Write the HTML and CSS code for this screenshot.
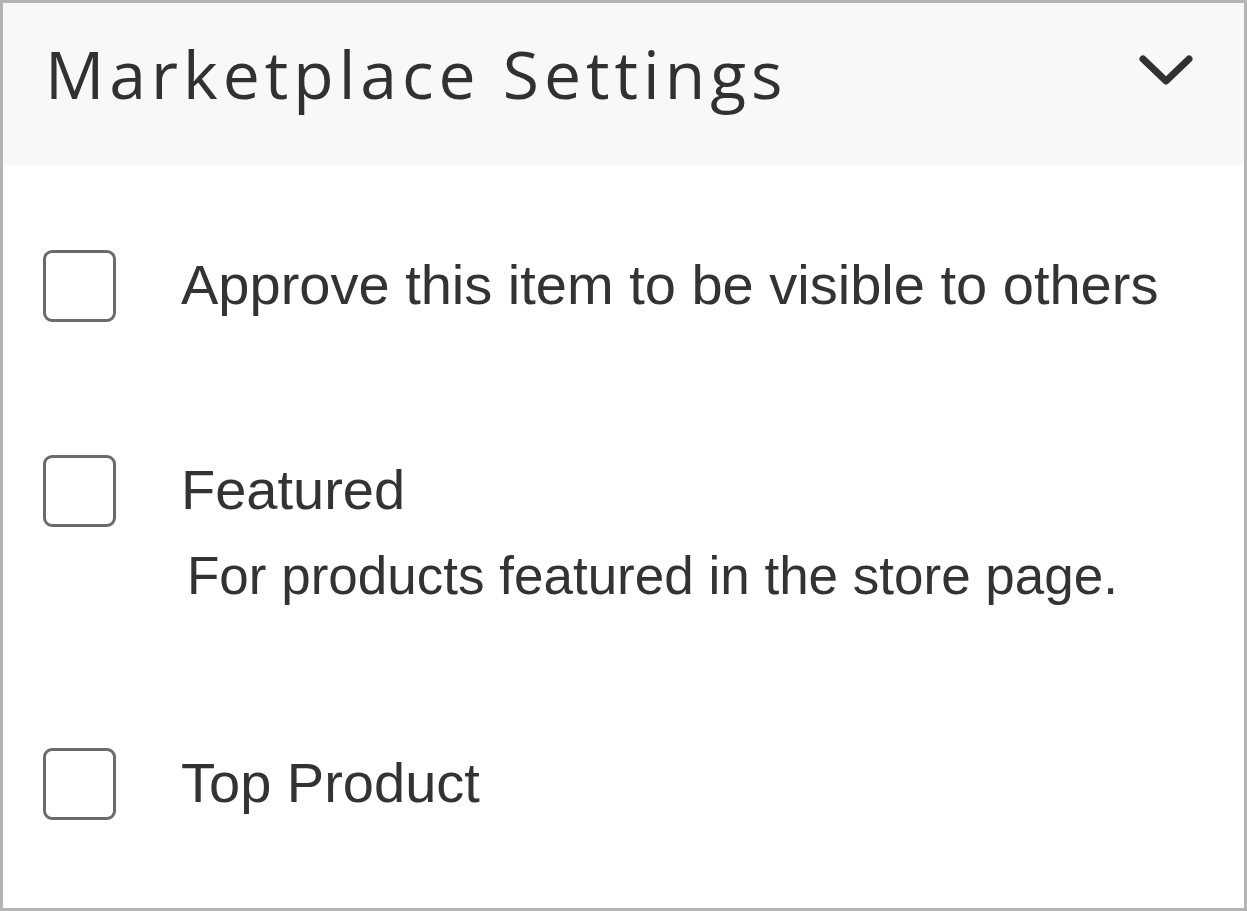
FILE: index.html
```html
<!DOCTYPE html>
<html>
<head>
<meta charset="utf-8">
<link rel="stylesheet" href="styles.css">
</head>
<body>
<section class="panel">
  <header class="panel-header">
    <h2 class="panel-title">Marketplace Settings</h2>
    <svg class="chevron" viewBox="0 0 56 36" width="56" height="36" aria-hidden="true">
      <polyline points="5,7 28,29 51,7" fill="none" stroke="#2f3133" stroke-width="7" stroke-linecap="round" stroke-linejoin="round"/>
    </svg>
  </header>
  <div class="panel-body">
    <div class="option">
      <span class="checkbox"></span>
      <div class="option-text">
        <div class="label">Approve this item to be visible to others</div>
      </div>
    </div>
    <div class="option">
      <span class="checkbox"></span>
      <div class="option-text">
        <div class="label">Featured</div>
        <div class="desc">For products featured in the store page.</div>
      </div>
    </div>
    <div class="option">
      <span class="checkbox"></span>
      <div class="option-text">
        <div class="label">Top Product</div>
      </div>
    </div>
  </div>
</section>
</body>
</html>
```
FILE: styles.css
```css
html, body {
  margin: 0;
  padding: 0;
  background: #ffffff;
}
.panel {
  box-sizing: border-box;
  width: 1247px;
  height: 911px;
  border: 3px solid #b4b4b4;
  background: #ffffff;
  overflow: hidden;
}
.panel-header {
  box-sizing: border-box;
  height: 162px;
  background: #f8f8f8;
  display: flex;
  align-items: flex-start;
  justify-content: space-between;
  padding: 35px 50px 0 42px;
}
.panel-title {
  margin: 0;
  font-family: "Open Sans", "Noto Sans", sans-serif;
  font-weight: 400;
  font-size: 66px;
  letter-spacing: 5px;
  color: #2f3133;
  line-height: 70px;
  white-space: nowrap;
}
.chevron {
  display: block;
  margin-top: 14px;
}
.panel-body {
  padding: 85px 40px 0 40px;
  display: flex;
  flex-direction: column;
  gap: 133px;
}
.option {
  display: flex;
  align-items: flex-start;
  gap: 65px;
}
.checkbox {
  box-sizing: border-box;
  flex: none;
  width: 73px;
  height: 72px;
  border: 3px solid #6b6b6b;
  border-radius: 9px;
  background: #fff;
}
.option-text {
  display: flex;
  flex-direction: column;
}
.label {
  font-family: "Liberation Sans", Arial, sans-serif;
  font-size: 56px;
  line-height: 70px;
  color: #333333;
  white-space: nowrap;
}
.desc {
  font-family: "Liberation Sans", Arial, sans-serif;
  font-size: 53px;
  line-height: 62px;
  color: #333333;
  margin-top: 20px;
  margin-bottom: 8px;
  padding-left: 6px;
  white-space: nowrap;
}
```
